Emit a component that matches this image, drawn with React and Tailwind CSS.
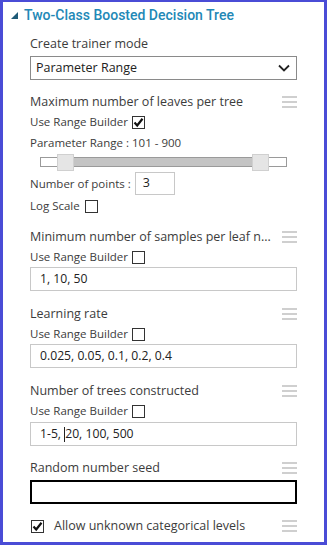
import React from "react";

const font = { fontFamily: '"Open Sans", "Noto Sans", sans-serif' };
const titleFont = { fontFamily: 'Roboto, "Open Sans", sans-serif' };

const Burger = () => (
  <div className="flex flex-col gap-[3px] w-[15px] shrink-0">
    <span className="block h-[2px] bg-[#cfcfcf]" />
    <span className="block h-[2px] bg-[#cfcfcf]" />
    <span className="block h-[2px] bg-[#cfcfcf]" />
  </div>
);

const Check = ({ checked }) => (
  <span className="inline-flex w-[13px] h-[13px] border border-[#333] bg-white items-center justify-center shrink-0">
    {checked && (
      <svg width="11" height="11" viewBox="0 0 11 11">
        <path d="M1.5 5.5 L4.2 8.5 L9.5 1.8" fill="none" stroke="#111" strokeWidth="2.2" />
      </svg>
    )}
  </span>
);

const Label = ({ text, burger, className = "" }) => (
  <div className={"flex items-center justify-between h-5 " + className}>
    <span className="text-[12.5px] text-[#3c3c3c] truncate">{text}</span>
    {burger && <Burger />}
  </div>
);

const RangeBuilder = ({ checked, className = "" }) => (
  <div className={"flex items-center gap-[4px] h-5 text-[11.5px] text-[#3c3c3c] " + className}>
    <span>Use Range Builder</span>
    <Check checked={checked} />
  </div>
);

const TextBox = ({ value, className = "" }) => (
  <div className={"h-[24px] border border-[#c8c8c8] bg-white flex items-center pl-[9px] text-[12.2px] text-[#222] " + className}>
    {value}
  </div>
);

export default function App() {
  return (
    <div style={font} className="w-[327px] h-[545px] bg-white border-[#4a4cd6] border-l-[3px] border-r-[3px] border-t-2 border-b-[3px] flex flex-col">
      <div className="h-[26px] flex items-center pl-[8px] gap-[6px]">
        <svg width="7" height="7" viewBox="0 0 7 7">
          <path d="M7 0 L7 7 L0 7 Z" fill="#1e5b78" />
        </svg>
        <span style={titleFont} className="text-[14px] font-medium text-[#2288b6]">Two-Class Boosted Decision Tree</span>
      </div>

      <div className="pl-[27px] pr-[27px] flex flex-col">
        <Label text="Create trainer mode" className="mt-[6px]" />
        <div className="mt-[2px] h-[24px] border border-[#8a8a8a] flex items-center justify-between pl-[5px] pr-[6px] text-[12.5px] text-[#222]">
          <span>Parameter Range</span>
          <svg width="12" height="8" viewBox="0 0 12 8">
            <path d="M1 1.5 L6 6.5 L11 1.5" fill="none" stroke="#222" strokeWidth="1.8" />
          </svg>
        </div>

        <Label text="Maximum number of leaves per tree" burger className="mt-[12px]" />
        <RangeBuilder checked />
        <div className="mt-[1px] h-5 flex items-center text-[11.5px] text-[#3c3c3c]">Parameter Range : 101 - 900</div>
        <div className="h-[18px] flex items-center pl-[10px] pr-[10px]">
          <div className="flex-1 h-[10px] border border-[#9a9a9a] bg-white flex items-center">
            <div className="w-[16px]" />
            <div className="w-[17px] h-[17px] bg-[#e5e5e5] border border-[#d0d0d0] shrink-0" />
            <div className="flex-1 h-full bg-[#c4c4c4]" />
            <div className="w-[17px] h-[17px] bg-[#e5e5e5] border border-[#d0d0d0] shrink-0" />
            <div className="w-[17px]" />
          </div>
        </div>
        <div className="mt-[1px] h-[23px] flex items-center gap-[4px] text-[11.5px] text-[#3c3c3c]">
          <span>Number of points :</span>
          <div className="w-[40px] h-[23px] border border-[#c8c8c8] flex items-center pl-[7px] text-[12.5px] text-[#222]">3</div>
        </div>
        <div className="mt-[1px] h-5 flex items-center gap-[5px] text-[11.5px] text-[#3c3c3c]">
          <span>Log Scale</span>
          <Check />
        </div>

        <Label text="Minimum number of samples per leaf n..." burger className="mt-[11px]" />
        <RangeBuilder />
        <TextBox value="1, 10, 50" />

        <Label text="Learning rate" burger className="mt-[13px]" />
        <RangeBuilder />
        <TextBox value="0.025, 0.05, 0.1, 0.2, 0.4" />

        <Label text="Number of trees constructed" burger className="mt-[13px]" />
        <RangeBuilder />
        <TextBox
          className="mt-[1px]"
          value={
            <>
              1-5,&nbsp;<span className="inline-block w-px h-[15px] bg-[#222] align-middle" />20, 100, 500
            </>
          }
        />

        <Label text="Random number seed" burger className="mt-[12px]" />
        <div className="mt-[2px] h-[24px] border-2 border-black bg-white" />

        <div className="mt-[12px] h-5 flex items-center justify-between">
          <div className="flex items-center gap-[10px] pl-px">
            <Check checked />
            <span className="text-[12.5px] text-[#3c3c3c]">Allow unknown categorical levels</span>
          </div>
          <Burger />
        </div>
      </div>
    </div>
  );
}
